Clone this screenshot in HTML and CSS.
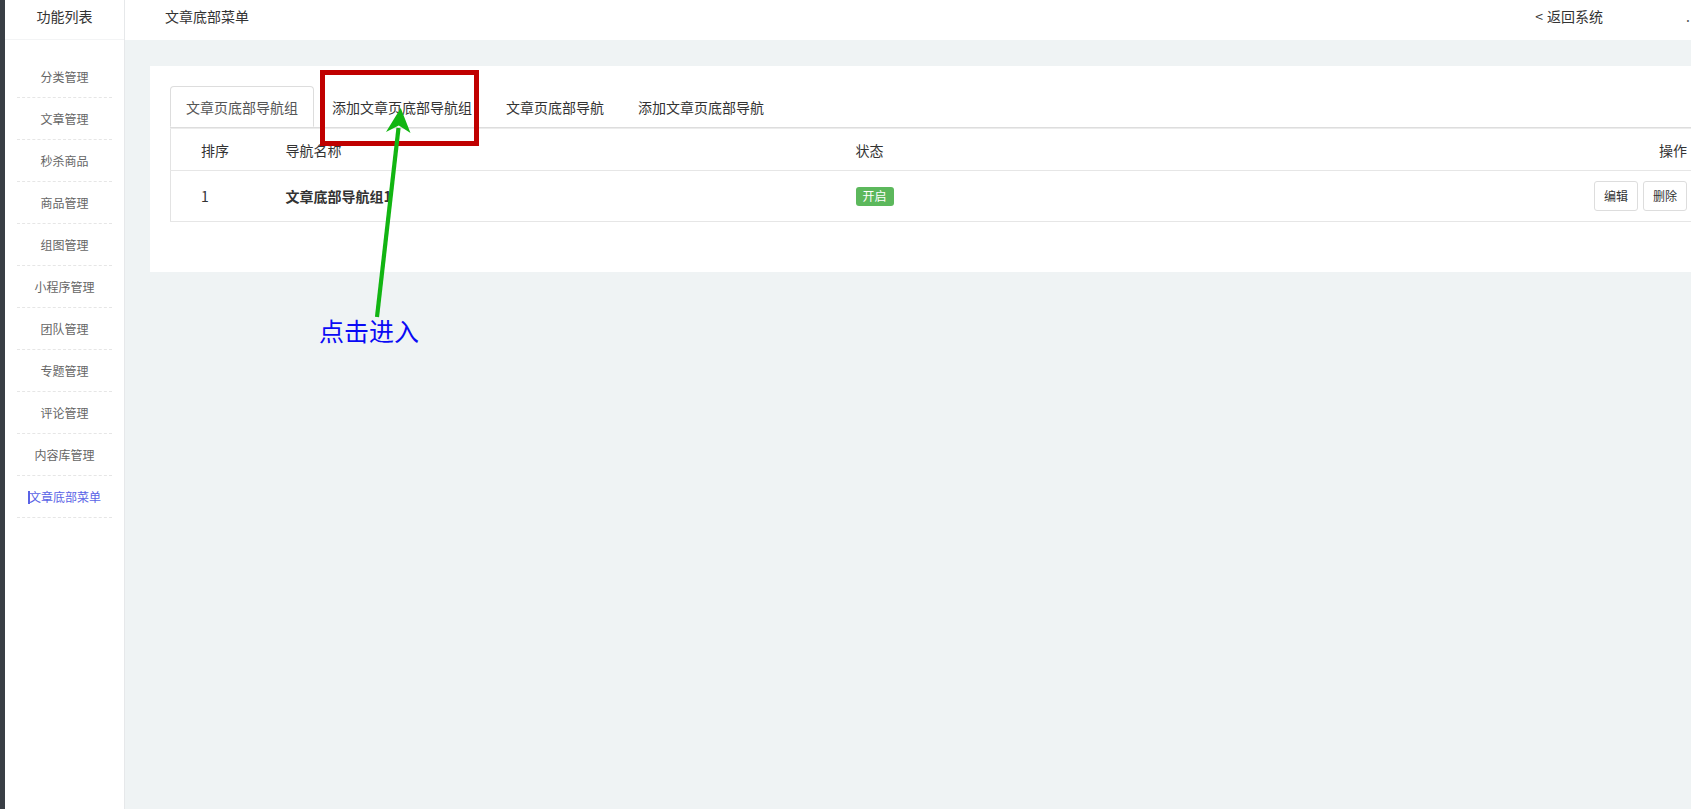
FILE: index.html
```html
<!DOCTYPE html>
<html lang="zh-CN">
<head>
<meta charset="utf-8">
<title>文章底部菜单</title>
<link rel="stylesheet" href="styles.css">
</head>
<body>
<div class="app">
  <div class="rail"></div>
  <aside class="sidebar">
    <div class="side-head">功能列表</div>
    <ul class="side-list">
      <li>分类管理</li>
      <li>文章管理</li>
      <li>秒杀商品</li>
      <li>商品管理</li>
      <li>组图管理</li>
      <li>小程序管理</li>
      <li>团队管理</li>
      <li>专题管理</li>
      <li>评论管理</li>
      <li>内容库管理</li>
      <li class="active"><span class="ibeam"></span>文章底部菜单</li>
    </ul>
  </aside>
  <div class="main">
    <header class="topbar">
      <span class="crumb">文章底部菜单</span>
      <span class="back"><span class="lt">&lt;</span>返回系统</span>
      <span class="dot">.</span>
    </header>
    <div class="content">
      <div class="card">
        <ul class="tabs">
          <li class="tab active">文章页底部导航组</li>
          <li class="tab">添加文章页底部导航组</li>
          <li class="tab">文章页底部导航</li>
          <li class="tab">添加文章页底部导航</li>
        </ul>
        <table class="grid">
          <colgroup>
            <col class="c1"><col class="c2"><col class="c3"><col class="c4">
          </colgroup>
          <thead>
            <tr><th>排序</th><th>导航名称</th><th>状态</th><th class="ops">操作</th></tr>
          </thead>
          <tbody>
            <tr>
              <td>1</td>
              <td class="name">文章底部导航组1</td>
              <td><span class="badge">开启</span></td>
              <td class="ops"><span class="btn">编辑</span><span class="btn">删除</span></td>
            </tr>
          </tbody>
        </table>
      </div>
    </div>
  </div>
</div>

<div class="mark-box"></div>
<svg class="mark-arrow" width="1691" height="809" viewBox="0 0 1691 809">
  <line x1="377" y1="317" x2="398.5" y2="128" stroke="#12b512" stroke-width="4.2" stroke-linecap="butt"/>
  <polygon points="400.7,108 386,132 398.8,125.5 410.5,133" fill="#12b512"/>
</svg>
<div class="mark-text">点击进入</div>
</body>
</html>
```
FILE: styles.css
```css
html, body {
  margin: 0;
  padding: 0;
  overflow: hidden;
}
body {
  width: 1691px;
  height: 809px;
  position: relative;
  font-family: "Noto Sans CJK SC", "Liberation Sans", sans-serif;
  color: #333;
  background: #eff3f4;
}
ul { margin: 0; padding: 0; list-style: none; }

.app {
  display: flex;
  height: 809px;
}
.rail {
  width: 5px;
  flex: 0 0 5px;
  background: #393e45;
}
.sidebar {
  width: 119px;
  flex: 0 0 119px;
  background: #fff;
  border-right: 1px solid #e6e8ea;
}
.side-head {
  height: 39px;
  line-height: 32px;
  font-size: 14px;
  text-align: center;
  color: #333;
  border-bottom: 1px solid #f3f4f5;
}
.side-list {
  padding-top: 16px;
}
.side-list li {
  margin: 0 12px;
  height: 41px;
  line-height: 41px;
  border-bottom: 1px dashed #e6e6e6;
  text-align: center;
  font-size: 12px;
  color: #666;
  white-space: nowrap;
}
.side-list li.active {
  color: #5a63e6;
}
.ibeam {
  display: inline-block;
  width: 2px;
  height: 13px;
  background: #5a63e6;
  vertical-align: -2px;
  margin-right: -1px;
}

.main {
  flex: 1 1 auto;
  min-width: 0;
  display: flex;
  flex-direction: column;
}
.topbar {
  height: 40px;
  flex: 0 0 40px;
  background: #fff;
  display: flex;
  align-items: flex-start;
  line-height: 32px;
  font-size: 14px;
  color: #333;
}
.crumb {
  margin-left: 40px;
}
.back {
  margin-left: auto;
  color: #333;
}
.back .lt {
  margin-right: 4px;
}
.dot {
  margin-left: 83px;
  padding-right: 1px;
  color: #555;
}

.content {
  flex: 1 1 auto;
  background: #eff3f4;
  padding: 26px 0 0 25px;
  overflow: hidden;
}
.card {
  width: 1566px;
  box-sizing: border-box;
  background: #fff;
  padding: 20px 20px 50px 20px;
}

.tabs {
  display: flex;
  border-bottom: 1px solid #ddd;
  height: 41px;
}
.tab {
  padding: 10px 15px;
  line-height: 20px;
  font-size: 14px;
  color: #333;
  border: 1px solid transparent;
  border-radius: 4px 4px 0 0;
  margin-right: 2px;
  white-space: nowrap;
}
.tab.active {
  color: #555;
  background: #fff;
  border-color: #ddd #ddd transparent #ddd;
}

.grid {
  width: 1526px;
  border-collapse: collapse;
  table-layout: fixed;
  font-size: 14px;
  color: #333;
  border-left: 1px solid #e3e3e3;
  border-top: 1px solid #ececec;
}
.grid col.c1 { width: 85px; }
.grid col.c2 { width: 570px; }
.grid col.c3 { width: 500px; }
.grid th, .grid td {
  text-align: left;
  font-weight: 400;
  padding: 0 0 0 30px;
  white-space: nowrap;
}
.grid thead th {
  height: 41px;
  line-height: 20px;
  border-bottom: 1px solid #e6e6e6;
}
.grid tbody td {
  height: 50px;
  border-bottom: 1px solid #e6e6e6;
  vertical-align: middle;
}
.grid .ops {
  text-align: right;
  padding: 0 9px 0 0;
}
.grid td.name {
  font-weight: 700;
}
.badge {
  display: inline-block;
  background: #5cb85c;
  color: #fff;
  font-size: 12px;
  line-height: 12px;
  padding: 3px 7px 4px;
  border-radius: 3px;
  vertical-align: middle;
  position: relative;
  top: -1px;
}
.btn {
  display: inline-block;
  box-sizing: border-box;
  height: 30px;
  line-height: 28px;
  padding: 0 9px;
  border: 1px solid #ddd;
  border-radius: 3px;
  font-size: 12px;
  color: #333;
  background: #fff;
  margin-left: 5px;
  vertical-align: middle;
}

/* annotation overlays */
.mark-box {
  position: absolute;
  left: 320px;
  top: 70px;
  width: 159px;
  height: 76px;
  box-sizing: border-box;
  border: 5px solid #c00000;
}
.mark-arrow {
  position: absolute;
  left: 0;
  top: 0;
  pointer-events: none;
}
.mark-text {
  position: absolute;
  left: 319px;
  top: 315px;
  font-size: 25px;
  line-height: 30px;
  color: #0a0af5;
  white-space: nowrap;
}
```
